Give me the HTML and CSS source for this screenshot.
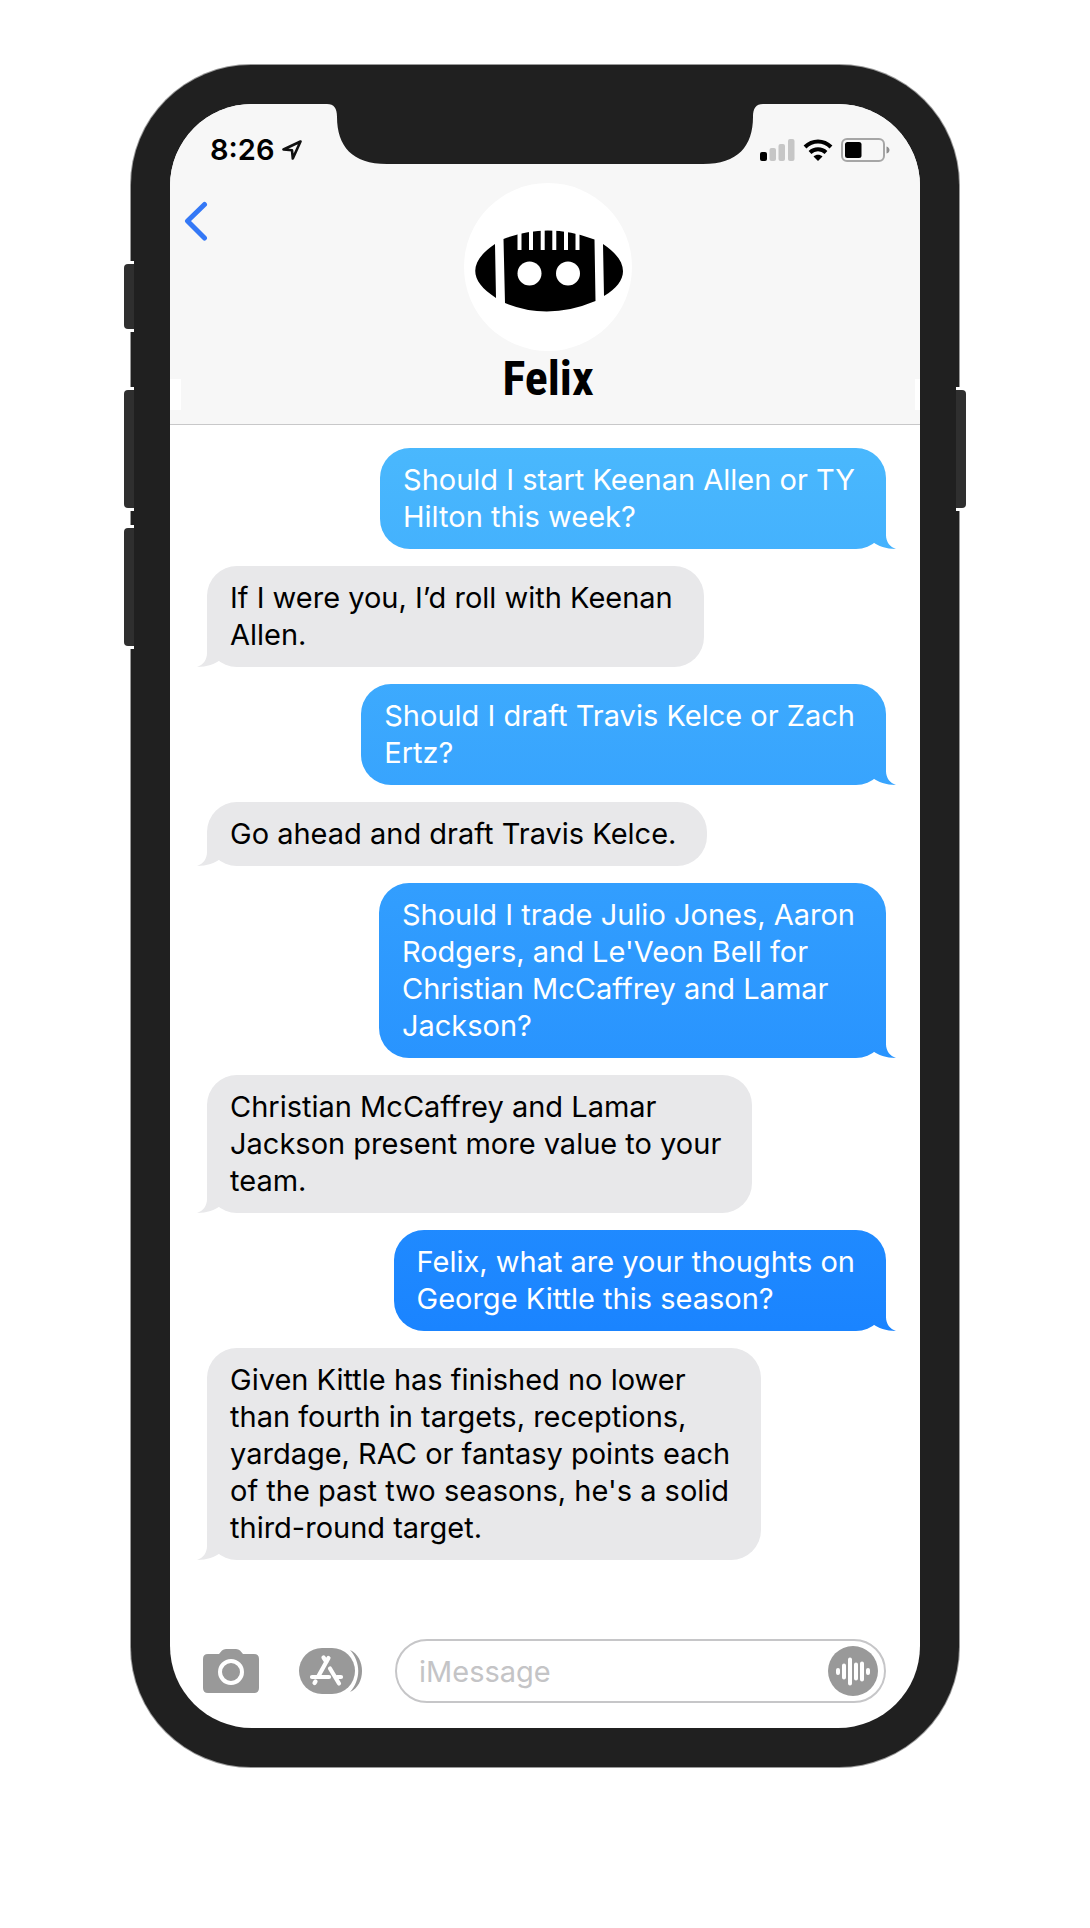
FILE: index.html
```html
<!DOCTYPE html>
<html lang="en">
<head>
<meta charset="utf-8">
<meta name="viewport" content="width=device-width, initial-scale=1">
<title>Felix</title>
<link rel="stylesheet" href="styles.css">
</head>
<body>
<main class="phone">
  <span class="side-button mute"></span>
  <span class="side-button volume-up"></span>
  <span class="side-button volume-down"></span>
  <span class="side-button power"></span>
  <div class="screen">
    <header class="header">
      <div class="status">
        <div class="status-left">
          <span class="time">8:26</span>
          <svg class="location" width="20" height="20" viewBox="0 0 20 20" aria-hidden="true"><path d="M18.500 1.500 1.500 9.500l8.500 .8.8 8.200z" fill="none" stroke="#111" stroke-width="2.600" stroke-linejoin="round"/></svg>
        </div>
        <svg class="notch" width="436" height="60" viewBox="0 0 436 60" aria-hidden="true"><path d="M0 0C7 0 10 4 10 13C10 42 25 60 60 60H376C411 60 426 42 426 13C426 4 429 0 436 0Z" fill="#202020"/></svg>
        <div class="status-right">
          <svg width="35" height="22" viewBox="0 0 35 22" aria-hidden="true"><rect y="13" width="7" height="9" rx="2"/><g fill="#c6c6c6"><rect x="9.500" y="9" width="6.500" height="13" rx="2"/><rect x="18.500" y="5" width="6.500" height="17" rx="2"/><rect x="28" width="6.500" height="22" rx="2"/></g></svg>
          <svg width="30" height="22" viewBox="0 0 30 22" aria-hidden="true"><g fill="none" stroke="#000" stroke-width="4"><path d="M2 8C9.500 .5 20.500 .5 28 8"/><path d="M7 13.500C11.500 9.200 18.500 9.200 23 13.500"/></g><path d="M15 22l-4.500-4.500c2.500-2.200 6.500-2.200 9 0z"/></svg>
          <svg width="49" height="24" viewBox="0 0 49 24" aria-hidden="true"><rect x="1" y="1" width="42" height="22" rx="5" fill="none" stroke="#a6a6a6" stroke-width="2"/><rect x="4" y="4" width="16.500" height="16" rx="2.500"/><path d="M45.500 8.500c4 1 4 6 0 7z" fill="#8e8e8e"/></svg>
        </div>
      </div>
      <div class="contact">
        <button class="back" type="button" aria-label="Back"><svg width="24" height="40" viewBox="0 0 24 40" aria-hidden="true"><path d="M20.500 3.500 3.500 20l17 17" fill="none" stroke="#3478f6" stroke-width="5" stroke-linecap="round" stroke-linejoin="round"/></svg></button>
        <div class="person">
          <svg class="avatar" width="168" height="168" viewBox="0 0 168 168" role="img" aria-label="Robot football">
            <circle cx="84" cy="84" r="84" fill="#fff"/>
            <path d="M31 61C4 79 5 98 32 115ZM139 61C166 79 165 98 140 113ZM39.500 56Q84 39 130.500 56.500L131.500 118Q84 138 41 120Z"/>
            <g fill="#fff"><circle cx="65.500" cy="90.500" r="12"/><circle cx="104" cy="90.500" r="12"/><path d="M53.500 47h4v20h-4zM65 46h4v21h-4zM76.700 46h4v21h-4zM88.300 46h4v21h-4zM100 46h4v21h-4zM111.500 47h4v20h-4z"/></g>
          </svg>
          <h1 class="name">Felix</h1>
        </div>
      </div>
    </header>

    <section class="messages" aria-label="Conversation">
      <p class="bubble sent">Should I start Keenan Allen or TY<br>Hilton this week?</p>
      <p class="bubble received">If I were you, I’d roll with Keenan<br>Allen.</p>
      <p class="bubble sent">Should I draft Travis Kelce or Zach<br>Ertz?</p>
      <p class="bubble received">Go ahead and draft Travis Kelce.</p>
      <p class="bubble sent">Should I trade Julio Jones, Aaron<br>Rodgers, and Le'Veon Bell for<br>Christian McCaffrey and Lamar<br>Jackson?</p>
      <p class="bubble received">Christian McCaffrey and Lamar<br>Jackson present more value to your<br>team.</p>
      <p class="bubble sent">Felix, what are your thoughts on<br>George Kittle this season?</p>
      <p class="bubble received">Given Kittle has finished no lower<br>than fourth in targets, receptions,<br>yardage, RAC or fantasy points each<br>of the past two seasons, he's a solid<br>third-round target.</p>
    </section>

    <form class="composer">
      <button class="tool" type="button" aria-label="Camera"><svg width="56" height="44" viewBox="0 0 56 44" aria-hidden="true"><path d="M5 5h11l3-3.500Q20.500 0 23 0h10q2.500 0 4 1.500L40 5h11q5 0 5 5v29q0 5-5 5H5q-5 0-5-5V10q0-5 5-5z" fill="#999"/><circle cx="28" cy="23" r="11" fill="none" stroke="#fff" stroke-width="4"/></svg></button>
      <button class="tool" type="button" aria-label="Apps"><svg width="64" height="46" viewBox="0 0 64 46" aria-hidden="true"><rect width="56" height="46" rx="23" fill="#999"/><path d="M51 2C67 9 67 37 51 44C62 32 62 14 51 2Z" fill="#999"/><g fill="none" stroke="#fff" stroke-width="4.200" stroke-linecap="round"><path d="M29.500 10 19.500 28M24.500 9.500l3 4.500M13 29h17M38 29h4M31 20.500l9 15M16.500 33.500l-1 1.500"/></g></svg></button>
      <div class="field">
        <input class="input" type="text" placeholder="iMessage" aria-label="iMessage">
        <button class="voice" type="button" aria-label="Record audio"><svg width="50" height="50" viewBox="0 0 50 50" aria-hidden="true"><circle cx="25" cy="25" r="25" fill="#999"/><path d="M10 24v3M16 19.500v12M22 13.500v24M28 18.500v14M34 17.500v16M40 24v3" stroke="#fff" stroke-width="4" stroke-linecap="round"/></svg></button>
      </div>
    </form>
  </div>
</main>
</body>
</html>
```
FILE: styles.css
```css
* {
  box-sizing: border-box;
}

body {
  margin: 0;
  padding: 65px 16px 160px;
  background: #fff;
  color: #000;
  font-family: Inter, "Liberation Sans", sans-serif;
}

button {
  margin: 0;
  padding: 0;
  border: 0;
  background: none;
  cursor: pointer;
}

svg {
  display: block;
  flex: none;
}

/* Phone frame */
.phone {
  position: relative;
  max-width: 828px;
  margin: 0 auto;
  padding: 39px;
  border-radius: 120px;
  background: #202020;
  box-shadow: 0 0 0 1px #999;
}

.side-button {
  position: absolute;
  left: -7px;
  width: 10px;
  height: 118px;
  border-radius: 4px 0 0 4px;
  background: #2f2f2f;
  box-shadow: 0 -3px 0 #fff, 0 3px 0 #fff;
}

.mute {
  top: 199px;
  height: 65px;
}

.volume-up {
  top: 325px;
}

.volume-down {
  top: 463px;
}

.power {
  top: 325px;
  right: -7px;
  left: auto;
  border-radius: 0 4px 4px 0;
}

.screen {
  overflow: hidden;
  border-radius: 82px;
  background: #fff;
}

/* Header */
.header {
  position: relative;
  border-bottom: 1px solid #c8c8c9;
  background: #f7f7f7;
}

.header::before,
.header::after {
  content: "";
  position: absolute;
  bottom: 14px;
  left: 0;
  width: 11px;
  height: 31px;
  background: #fff;
}

.header::after {
  right: 0;
  left: auto;
  width: 5px;
}

.status {
  display: grid;
  grid-template-columns: minmax(0, 1fr) 436px minmax(0, 1fr);
}

.status-left,
.status-right {
  display: flex;
  align-items: center;
  padding-top: 32px;
}

.status-left {
  gap: 8px;
  padding-left: 40px;
}

.status-right {
  justify-content: flex-end;
  gap: 8px;
  padding-right: 30px;
}

.time {
  font-size: 29px;
  font-weight: 600;
  line-height: 28px;
}

.contact {
  display: grid;
  grid-template-columns: 1fr auto 1fr;
  padding: 19px 0 17px 6px;
}

.back {
  justify-self: start;
  align-self: start;
  margin: 18px 8px;
}

.person {
  display: flex;
  flex-direction: column;
  align-items: center;
}

.name {
  margin: 0;
  font-family: "Roboto Condensed", "Liberation Sans Narrow", "Open Sans Condensed", "Liberation Sans", sans-serif;
  font-size: 48px;
  font-weight: 700;
  line-height: 56px;
}

/* Conversation */
.messages {
  display: flex;
  flex-direction: column;
  align-items: flex-start;
  gap: 17px;
  padding: 23px 34px 0 37px;
}

.bubble {
  position: relative;
  margin: 0;
  padding: 13px 31px 14px 23px;
  border-radius: 30px;
  font-size: 29px;
  line-height: 37px;
}

.bubble::after {
  content: "";
  position: absolute;
  bottom: 0;
  width: 40px;
  height: 36px;
  background: inherit;
  clip-path: path("M30 6V22C30 29 34 34 40 36C30 36 22 33 17 29L10 18Z");
}

.sent,
.sent::after {
  background: linear-gradient(#4ab8fd 23%, #1a84ff 69%) fixed;
}

.sent {
  align-self: flex-end;
  color: #fff;
}

.sent::after {
  right: -10px;
}

.received {
  background: #e8e8ea;
}

.received::after {
  left: -10px;
  transform: scaleX(-1);
}

/* Composer */
.composer {
  display: flex;
  align-items: center;
  gap: 32px;
  padding: 79px 34px 25px 33px;
}

.tool {
  flex: none;
  width: 64px;
}

.field {
  display: flex;
  flex: 1;
  align-items: center;
  min-width: 0;
  padding: 5px 6px 5px 22px;
  border: 2px solid #c6c6c8;
  border-radius: 32px;
}

.input {
  flex: 1;
  min-width: 0;
  padding: 0;
  border: 0;
  outline: 0;
  background: none;
  color: #000;
  font-family: inherit;
  font-size: 29px;
  line-height: 37px;
}

.input::placeholder {
  color: #c4c4c6;
  opacity: 1;
}
```
